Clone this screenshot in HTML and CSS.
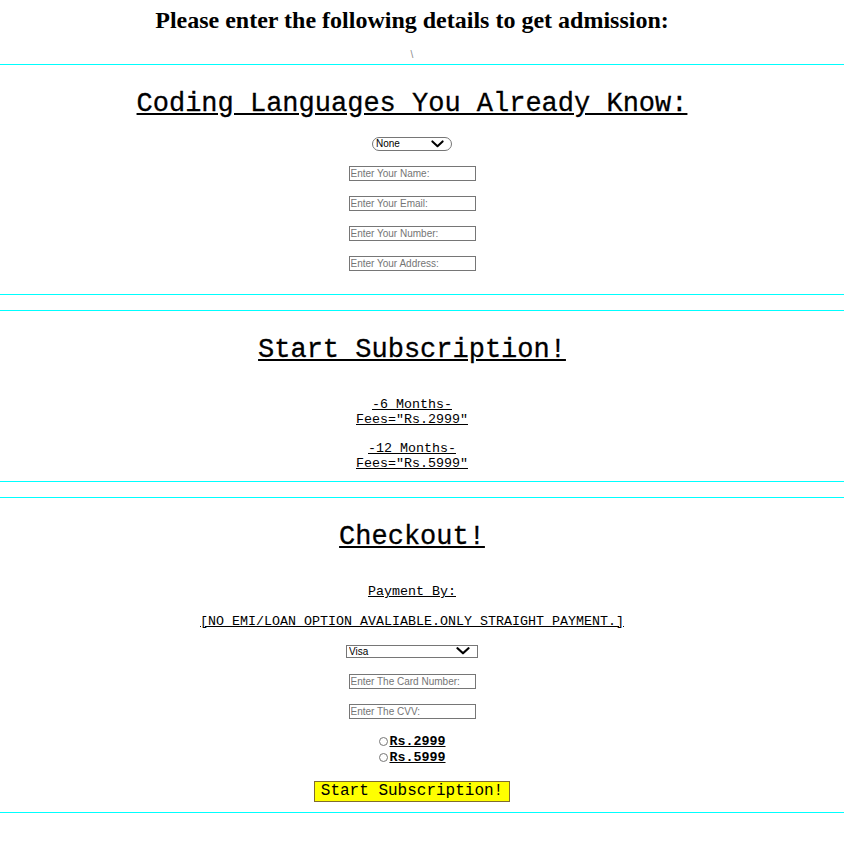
FILE: index.html
```html
<!DOCTYPE html>
<html>
<head>
<meta charset="utf-8">
<title>Admission</title>
<link rel="stylesheet" href="styles.css">
</head>
<body>
<header class="top">
  <h2 class="title">Please enter the following details to get admission:</h2>
  <div class="slash">\</div>
</header>

<section class="panel">
  <h1 class="sec-title">Coding Languages You Already Know:</h1>
  <span class="sel-wrap langs-wrap">
    <select class="langs">
      <option>None</option>
      <option>HTML</option>
      <option>CSS</option>
      <option>JavaScript</option>
    </select>
    <svg class="chev" viewBox="0 0 14 8" aria-hidden="true"><path d="M1.5 1.2 L7 6.3 L12.5 1.2" fill="none" stroke="#000" stroke-width="2.2" stroke-linecap="round" stroke-linejoin="round"/></svg>
  </span>
  <input class="field first" type="text" placeholder="Enter Your Name:">
  <input class="field" type="email" placeholder="Enter Your Email:">
  <input class="field" type="text" placeholder="Enter Your Number:">
  <input class="field" type="text" placeholder="Enter Your Address:">
</section>

<section class="panel panel-plans">
  <h1 class="sec-title">Start Subscription!</h1>
  <div class="plan first-plan">
    <div class="u">-6 Months-</div>
    <div class="u">Fees="Rs.2999"</div>
  </div>
  <div class="plan second-plan">
    <div class="u">-12 Months-</div>
    <div class="u">Fees="Rs.5999"</div>
  </div>
</section>

<section class="panel panel-checkout">
  <h1 class="sec-title">Checkout!</h1>
  <div class="u line pay-by">Payment By:</div>
  <div class="u line note">[NO EMI/LOAN OPTION AVALIABLE.ONLY STRAIGHT PAYMENT.]</div>
  <span class="sel-wrap card-wrap">
    <select class="card-type">
      <option>Visa</option>
      <option>MasterCard</option>
      <option>RuPay</option>
    </select>
    <svg class="chev" viewBox="0 0 14 8" aria-hidden="true"><path d="M1.5 1.2 L7 6.3 L12.5 1.2" fill="none" stroke="#000" stroke-width="2.2" stroke-linecap="round" stroke-linejoin="round"/></svg>
  </span>
  <input class="field card" type="text" placeholder="Enter The Card Number:">
  <input class="field" type="text" placeholder="Enter The CVV:">
  <div class="radios">
    <label class="radio-row"><input type="radio" name="plan"><span class="u">Rs.2999</span></label>
    <label class="radio-row"><input type="radio" name="plan"><span class="u">Rs.5999</span></label>
  </div>
  <button class="submit" type="button">Start Subscription!</button>
</section>
</body>
</html>
```

FILE: styles.css
```css
html, body {
  margin: 0;
  padding: 0;
  background: #ffffff;
}

body {
  font-family: "Liberation Mono", "Courier New", monospace;
  color: #000000;
}

.top {
  display: flex;
  flex-direction: column;
  align-items: center;
  padding-right: 20px;
}

.title {
  font-family: "Liberation Serif", "Times New Roman", serif;
  font-size: 24px;
  font-weight: bold;
  line-height: 28px;
  margin: 6px 0 0;
}

.slash {
  font-family: "Liberation Sans", Arial, sans-serif;
  font-size: 10px;
  line-height: 11px;
  color: #888888;
  margin-top: 15px;
  margin-bottom: 4px;
}

.panel {
  border-top: 1px solid #00ffff;
  border-bottom: 1px solid #00ffff;
  display: flex;
  flex-direction: column;
  align-items: center;
  padding-right: 20px;
  padding-bottom: 23px;
}

.panel + .panel {
  margin-top: 15px;
}

.sec-title {
  font-family: "Liberation Mono", "Courier New", monospace;
  font-size: 27px;
  font-weight: normal;
  line-height: 31px;
  margin: 24px 0 0;
  text-decoration: underline;
  -webkit-text-stroke: 0.3px #000;
}

.u {
  text-decoration: underline;
}

.sel-wrap {
  position: relative;
  display: flex;
}

.chev {
  position: absolute;
  right: 8px;
  width: 13px;
  height: 8px;
  pointer-events: none;
}

.langs-wrap {
  margin-top: 17px;
}

.langs-wrap .chev {
  top: 3px;
}

.langs {
  -webkit-appearance: none;
  appearance: none;
  box-sizing: border-box;
  width: 80px;
  height: 14px;
  margin: 0;
  font-family: "Liberation Sans", Arial, sans-serif;
  font-size: 10px;
  line-height: 12px;
  padding: 0 0 0 3px;
  border: 1px solid #767676;
  border-radius: 7px;
  background: #ffffff;
  color: #000000;
}

.field {
  box-sizing: border-box;
  width: 127px;
  height: 15px;
  margin: 15px 0 0;
  padding: 0 1px;
  border: 1px solid #767676;
  font-family: "Liberation Sans", Arial, sans-serif;
  font-size: 10px;
  color: #000000;
}

.field::placeholder {
  color: #757575;
}

.panel-plans {
  padding-bottom: 10px;
}

.plan {
  font-size: 13.33px;
  line-height: 15px;
  text-align: center;
}

.first-plan {
  margin-top: 31px;
}

.second-plan {
  margin-top: 14px;
}

.panel-checkout {
  padding-bottom: 10px;
}

.line {
  font-size: 13.33px;
  line-height: 15px;
}

.pay-by {
  margin-top: 31px;
}

.note {
  margin-top: 15px;
}

.card-wrap {
  margin-top: 16px;
}

.card-wrap .chev {
  top: 2px;
  width: 14px;
}

.card-type {
  -webkit-appearance: none;
  appearance: none;
  box-sizing: border-box;
  width: 132px;
  height: 13px;
  margin: 0;
  padding: 0 0 0 2px;
  font-family: "Liberation Sans", Arial, sans-serif;
  font-size: 10px;
  line-height: 11px;
  border: 1px solid #767676;
  border-radius: 0;
  background: #ffffff;
  color: #000000;
}

.field.card {
  margin-top: 16px;
}

.radios {
  margin-top: 14px;
  display: flex;
  flex-direction: column;
  align-items: center;
}

.radio-row {
  display: flex;
  align-items: center;
  height: 16px;
  font-size: 13.33px;
  font-weight: bold;
}

.radio-row input {
  width: 9px;
  height: 9px;
  margin: 0 2px 0 0;
}

.submit {
  margin-top: 16px;
  box-sizing: border-box;
  width: 196px;
  height: 21px;
  padding: 0;
  white-space: nowrap;
  background: #ffff00;
  border: 1px solid #806c2e;
  font-family: "Liberation Mono", "Courier New", monospace;
  font-size: 16px;
  line-height: 19px;
  color: #000000;
}
```
